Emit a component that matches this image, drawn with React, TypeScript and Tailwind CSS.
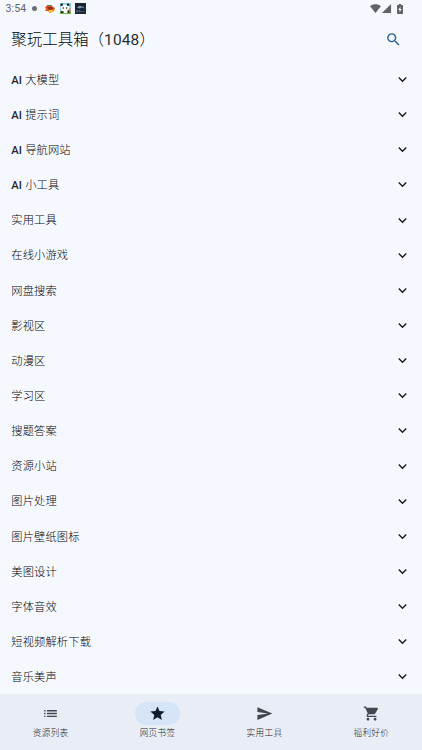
import React from 'react';
import {
  MdExpandMore,
  MdList,
  MdSearch,
  MdSend,
  MdShoppingCart,
  MdSignalCellular4Bar,
  MdStar,
} from 'react-icons/md';
import type { IconType } from 'react-icons';

const categories: { prefix?: string; title: string }[] = [
  { prefix: 'AI', title: '大模型' },
  { prefix: 'AI', title: '提示词' },
  { prefix: 'AI', title: '导航网站' },
  { prefix: 'AI', title: '小工具' },
  { title: '实用工具' },
  { title: '在线小游戏' },
  { title: '网盘搜索' },
  { title: '影视区' },
  { title: '动漫区' },
  { title: '学习区' },
  { title: '搜题答案' },
  { title: '资源小站' },
  { title: '图片处理' },
  { title: '图片壁纸图标' },
  { title: '美图设计' },
  { title: '字体音效' },
  { title: '短视频解析下载' },
  { title: '音乐美声' },
];

const tabs: { label: string; icon: IconType; active?: boolean }[] = [
  { label: '资源列表', icon: MdList },
  { label: '网页书签', icon: MdStar, active: true },
  { label: '实用工具', icon: MdSend },
  { label: '福利好价', icon: MdShoppingCart },
];

const StatusBar: React.FC = () => (
  <div className="flex h-[17px] shrink-0 items-center justify-between pl-[5.5px] pr-[19.5px] text-[#5f6368]">
    <div className="flex items-center">
      <span className="w-[26.5px] pt-[2px] text-[10.5px] leading-none tracking-[0.1px]">3:54</span>
      <span className="h-[5px] w-[5px] rounded-full bg-[#6c7076]" />
      {/* goldfish */}
      <svg viewBox="0 0 12 12" className="ml-[7px] h-[12px] w-[12px]">
        <rect width="12" height="12" rx="3" fill="#fff" />
        <path d="M1 4 4 2 8 3 11 5 10 8 6 10 4 8 1 8 2 6z" fill="#e65a20" />
        <path d="M3 4h5l1 2-4 1z" fill="#8c2f16" />
        <path d="M5 7h5l-2 2H5z" fill="#f5c52f" />
        <path d="M3 2h5v1H3z" fill="#51813b" />
      </svg>
      {/* panda */}
      <svg viewBox="0 0 12 12" className="ml-[4px] h-[11px] w-[11px]">
        <rect width="12" height="12" fill="#7fcbe0" />
        <path d="M0 9h12v3H0z" fill="#6caf3d" />
        <ellipse cx="5.5" cy="5.5" rx="4.8" ry="4" fill="#fff" />
        <circle cx="1.8" cy="2" r="1.4" fill="#222" />
        <circle cx="8.8" cy="2" r="1.4" fill="#222" />
        <circle cx="3.5" cy="5.5" r=".9" fill="#222" />
        <circle cx="7.2" cy="5.5" r=".9" fill="#222" />
        <path d="M1 9h3v2H1zM8 8h2v3H8z" fill="#222" />
        <path d="M4 8h4v3H4z" fill="#fff" />
        <path d="M9.5 6h2v3h-2z" fill="#ec784e" />
      </svg>
      <svg viewBox="0 0 12 12" className="ml-[4px] h-[11px] w-[11px]">
        <rect width="12" height="12" fill="#182536" />
        <path d="M2 5 5 3 9 4 11 6 8 5 5 6z" fill="#8296a6" />
        <path d="M1 8h4l2 1h4v1H1z" fill="#40566a" />
      </svg>
    </div>
    <div className="flex items-center">
      <svg viewBox="0 0 12 10" className="h-[9px] w-[11px]" fill="currentColor">
        <path d="M0 2.4C3.4-.5 8.6-.5 12 2.4L6 10z" />
      </svg>
      <MdSignalCellular4Bar className="h-[11px] w-[11px]" />
      <svg viewBox="0 0 6 10" className="ml-[5px] h-[10px] w-[6px]">
        <path d="M1.8 0h2.4v1h1q.8 0 .8.8v7.4q0 .8-.8.8H.8Q0 10 0 9.2V1.8Q0 1 .8 1h1z" fill="currentColor" />
        <path d="M3.4 2.7 1.3 6h1.3v2.3L4.7 5H3.4z" fill="#f5f9ff" />
      </svg>
    </div>
  </div>
);

const CategoryRow: React.FC<{ prefix?: string; title: string }> = ({ prefix, title }) => (
  <button className="flex h-[35.15px] w-full shrink-0 items-center justify-between pl-[11.25px] pr-[11.25px] text-left">
    <span className="pt-[1.5px] text-[11.25px] leading-none font-light tracking-[0.15px] text-[#04060a]">
      {prefix && <span className="font-medium text-[#25282d]">{prefix} </span>}
      {title}
    </span>
    <MdExpandMore className="h-[17px] w-[17px]" />
  </button>
);

const App: React.FC = () => {
  return (
    <div className="flex h-[750px] w-[422px] flex-col overflow-hidden bg-[#f5f9ff] font-[Roboto,'Noto_Sans_CJK_SC',sans-serif] text-[#191c20]">
      <StatusBar />
      <header className="flex h-[45px] shrink-0 items-center justify-between pl-[11.25px] pr-[20px]">
        <h1 className="pt-[2px] text-[15.47px] leading-none font-light text-[#04060a]">
          聚玩工具箱（<span className="font-normal tracking-[0.15px] text-[#2a2d32]">1048</span>）
        </h1>
        <button aria-label="搜索">
          <MdSearch className="h-[17px] w-[17px] text-[#2c6097]" />
        </button>
      </header>
      <main className="flex min-h-0 flex-1 flex-col overflow-hidden">
        {categories.map(({ prefix, title }) => (
          <CategoryRow key={title} prefix={prefix} title={title} />
        ))}
      </main>
      <nav className="grid h-[56px] shrink-0 grid-cols-4 gap-x-[5.6px] bg-[#e9eef6]">
        {tabs.map(({ label, icon: Icon, active }) => (
          <button key={label} className="flex flex-col items-center pt-[8px] text-[#43474e]">
            <span
              className={`flex h-[23px] w-[45px] items-center justify-center rounded-full ${
                active ? 'bg-[#d6e4f7] text-[#101c2b]' : ''
              }`}
            >
              <Icon className="h-[17px] w-[17px]" />
            </span>
            <span className="mt-[3px] text-[8.6px] leading-[11px] font-light tracking-[0.35px] text-[#25282e]">
              {label}
            </span>
          </button>
        ))}
      </nav>
    </div>
  );
};

export default App;
